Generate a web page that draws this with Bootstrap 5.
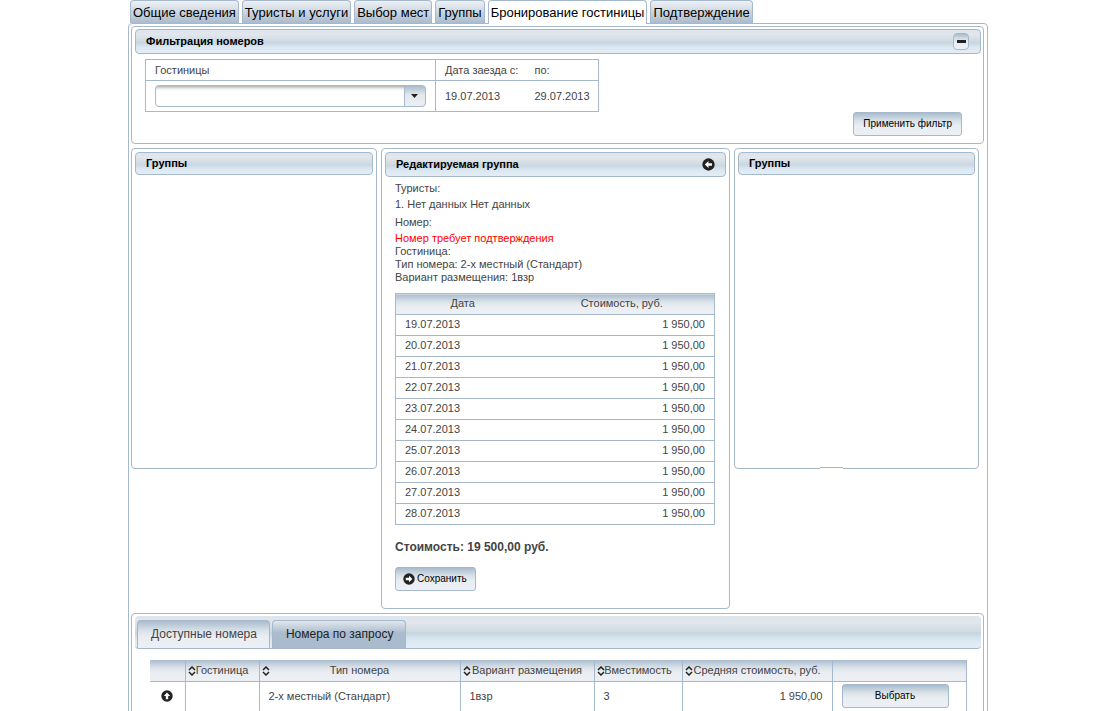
<!DOCTYPE html>
<html lang="ru">
<head>
<meta charset="utf-8">
<meta name="viewport" content="width=device-width, initial-scale=1">
<title>Бронирование гостиницы</title>
<link href="https://cdn.jsdelivr.net/npm/bootstrap@5.3.0/dist/css/bootstrap.min.css" rel="stylesheet">
<style>
:root { --line: #a6b9cc; --raised: linear-gradient(#a9bccd 0, #d9e1e8 35%, #eaeef2 60%, #eceff3 100%); --bar: linear-gradient(#dfe5ec 0, #e2e6ed 20%, #cfdae1 50%, #c7d5e1 52%, #dce8f1 76%, #e3edf5 100%); }
body { font: 11px/13px "Liberation Sans", Arial, sans-serif; color: #444; background: #fff; }
.page-wrap { max-width: 860px; }
.step-tabs { gap: 3px; margin: 0 2px -1px; position: relative; font-size: 13px; }
.step-tabs a { height: 23px; padding: 1px 2px 0; border: 1px solid var(--line); border-bottom-width: 0; border-radius: 4px 4px 0 0; color: #000; background: linear-gradient(#eef1f4, #a9bbcd); text-decoration: none; white-space: nowrap; line-height: 22px; text-align: center; }
.step-tabs a.active { background: #fff; height: 24px; }
.frame { border: 1px solid var(--line); border-radius: 4px; padding: 2px 3px 2px 2px; }
.panel { border: 1px solid var(--line); border-radius: 4px; padding: 2px 2px 3px 3px; }
.panel-bar { border: 1px solid var(--line); border-radius: 4px; background: var(--bar); color: #000; font-size: 11px; line-height: 13px; font-weight: bold; padding: 5px 10px; margin: 0; }
.panel-title { font-size: 11px; line-height: 13px; font-weight: bold; margin: 0; }
.grid-table { border-collapse: collapse; }
.grid-table th, .grid-table td { font-weight: normal; }
.filter-table, .filter-table .edge { border: 1px solid var(--line); }
.filter-table th, .filter-table td { padding: 0 8px 0 9px; white-space: nowrap; }
.filter-table .head { height: 21px; border-bottom: 1px solid var(--line); }
.filter-table .vals { height: 31px; }
.filter-table .w-hotel { width: 290px; }
.filter-table .w-from { width: 90px; padding-right: 6px; }
.combo { appearance: none; display: block; width: 271px; height: 22px; border: 1px solid var(--line); border-radius: 4px; font: inherit; padding: 0 24px 0 4px;
  background: url("data:image/svg+xml,%3Csvg xmlns='http://www.w3.org/2000/svg' width='7' height='4'%3E%3Cpath d='M0 0h7L3.5 4z' fill='%23222'/%3E%3C/svg%3E") right 7px center no-repeat, linear-gradient(var(--line), var(--line)) right 20px top/1px 100% no-repeat, linear-gradient(#a9bccd, #e4e9ee 45%, #eceff3) right/20px 100% no-repeat, linear-gradient(#b4b4b4, #f2f2f2 3px, #fff 5px); }
.push { font-size: 10px; line-height: 13px; color: #000; border: 1px solid var(--line); border-radius: 3px; background: var(--raised); padding: 4px 9px 5px; }
.push:hover { border-color: var(--line); }
.save { gap: 2px; padding: 4px 8px 5px 7px; }
.collapse-btn { width: 16px; height: 17px; margin: 3px 1px; padding: 0; border: 1px solid var(--line); border-radius: 4px; background: var(--raised); }
.filter-box { padding: 5px 19px 4px 10px; }
.three { display: grid; grid-template-columns: 246fr 349fr 245fr; gap: 4px; margin: 4px 5px 4px 0; align-items: start; }
.three .panel { padding: 3px; }
.three .side { height: 321px; }
.three .side .panel-bar { padding: 4px 10px; }
.side-r { position: relative; }
.side-r::after { content: ""; position: absolute; left: 35%; bottom: -1px; width: 23px; height: 2px; background: #fff; border-top: 1px solid var(--line); }
.group-body { padding: 5px 11px 14px 10px; }
.group-body p { margin: 0; }
.group-body .tourist { margin: 3px 0 5px; }
.group-body .room { margin-bottom: 3px; }
.alert-line { color: #f00; }
.price-table { width: 100%; margin-top: 9px; border: 1px solid var(--line); }
.price-table th { background: var(--raised); text-align: center; height: 21px; padding: 0 9px 1px; }
.price-table td { border-top: 1px solid var(--line); height: 21px; padding: 0 9px 1px; }
.price-table th:first-child { width: 42%; }
.group-body .total { font-size: 12px; line-height: 14px; font-weight: bold; margin: 15px 0 13px; }
.room-tabs { background: var(--bar); border-bottom: 1px solid var(--line); border-radius: 4px; padding: 4px 2px 0; gap: 2px; height: 33px; }
.room-tabs a { font-size: 12px; line-height: 13px; padding: 7px 12px 8px 13px; border: 1px solid var(--line); border-bottom: 0; border-radius: 4px 4px 0 0; text-decoration: none; color: #222; background: linear-gradient(#e2e7ec, #a9bbcd 45%); }
.room-tabs a.active { color: #444; background: var(--raised); }
.room-box { padding: 11px 16px 11px 15px; }
.room-table { width: 100%; table-layout: fixed; }
.room-table th { position: relative; background: var(--raised); height: 21px; text-align: center; border-bottom: 1px solid var(--line); padding: 0; white-space: nowrap; }
.room-table th, .room-table td { border-right: 1px solid var(--line); }
.room-table td { height: 30px; padding: 0 9px; border-bottom: 1px solid var(--line); }
.room-table th svg { position: absolute; left: 2px; top: 6px; }
.c1 { width: 35px; } .c2 { width: 74px; } .c3 { width: 201px; } .c4 { width: 134px; } .c5 { width: 88px; } .c6 { width: 150px; } .c7 { width: 134px; }
.pick { width: 107px; }
.bare { border: 0; background: none; padding: 0; display: block; line-height: 0; }
</style>
</head>
<body class="pe-1">
<svg width="0" height="0" class="position-absolute" aria-hidden="true">
  <symbol id="round-arrow" viewBox="0 0 12 12"><circle cx="6" cy="6" r="5.7" fill="#222"/><path d="M2.6 6 6 2.8v2h3.2v2.4H6v2z" fill="#fff"/></symbol>
  <symbol id="sorter" viewBox="0 0 8 10"><path d="M1 4 4 1l3 3M1 6l3 3 3-3" fill="none" stroke="#222" stroke-width="1.5"/></symbol>
</svg>
<div class="page-wrap mx-auto">
  <nav class="step-tabs d-flex">
    <a href="#">Общие сведения</a><a href="#">Туристы и услуги</a><a href="#">Выбор мест</a><a href="#">Группы</a><a href="#" class="active" aria-current="page">Бронирование гостиницы</a><a href="#">Подтверждение</a>
  </nav>
  <main class="frame">
    <section class="panel">
      <div class="panel-bar d-flex justify-content-between align-items-center py-0">
        <h2 class="panel-title">Фильтрация номеров</h2>
        <button type="button" class="collapse-btn d-flex align-items-center justify-content-center" aria-label="Свернуть"><svg width="9" height="3"><path d="M0 0h9v3H0z" fill="#222"/></svg></button>
      </div>
      <div class="filter-box">
        <table class="grid-table filter-table">
          <tr><th class="head w-hotel edge"><label for="hotel">Гостиницы</label></th><th class="head w-from">Дата заезда с:</th><th class="head">по:</th></tr>
          <tr><td class="vals edge"><select id="hotel" class="combo"><option></option></select></td><td>19.07.2013</td><td>29.07.2013</td></tr>
        </table>
        <div class="text-end lh-1"><button type="button" class="btn push">Применить фильтр</button></div>
      </div>
    </section>
    <div class="three">
      <section class="panel side"><h2 class="panel-bar">Группы</h2></section>
      <section class="panel">
        <div class="panel-bar d-flex justify-content-between align-items-center"><h2 class="panel-title">Редактируемая группа</h2>
          <button type="button" class="bare" aria-label="Назад"><svg width="13" height="13"><use href="#round-arrow"/></svg></button></div>
        <div class="group-body">
          <p>Туристы:</p>
          <p class="tourist">1. Нет данных Нет данных</p>
          <p class="room">Номер:</p>
          <p class="alert-line">Номер требует подтверждения</p>
          <p>Гостиница:</p>
          <p>Тип номера: 2-х местный (Стандарт)</p>
          <p>Вариант размещения: 1взр</p>
          <table class="grid-table price-table">
            <thead><tr><th>Дата</th><th>Стоимость, руб.</th></tr></thead>
            <tbody>
              <tr><td>19.07.2013</td><td class="text-end">1 950,00</td></tr>
              <tr><td>20.07.2013</td><td class="text-end">1 950,00</td></tr>
              <tr><td>21.07.2013</td><td class="text-end">1 950,00</td></tr>
              <tr><td>22.07.2013</td><td class="text-end">1 950,00</td></tr>
              <tr><td>23.07.2013</td><td class="text-end">1 950,00</td></tr>
              <tr><td>24.07.2013</td><td class="text-end">1 950,00</td></tr>
              <tr><td>25.07.2013</td><td class="text-end">1 950,00</td></tr>
              <tr><td>26.07.2013</td><td class="text-end">1 950,00</td></tr>
              <tr><td>27.07.2013</td><td class="text-end">1 950,00</td></tr>
              <tr><td>28.07.2013</td><td class="text-end">1 950,00</td></tr>
            </tbody>
          </table>
          <p class="total">Стоимость: 19 500,00 руб.</p>
          <button type="button" class="btn push save d-flex align-items-center"><svg width="12" height="12"><use href="#round-arrow" transform="rotate(180 6 6)"/></svg><span>Сохранить</span></button>
        </div>
      </section>
      <section class="panel side side-r"><h2 class="panel-bar">Группы</h2></section>
    </div>
    <section class="panel">
      <nav class="room-tabs d-flex"><a href="#" class="active">Доступные номера</a><a href="#">Номера по запросу</a></nav>
      <div class="room-box">
        <table class="grid-table room-table">
          <colgroup><col class="c1"><col class="c2"><col class="c3"><col class="c4"><col class="c5"><col class="c6"><col class="c7"></colgroup>
          <thead><tr><th></th>
            <th><svg width="8" height="10"><use href="#sorter"/></svg>Гостиница</th>
            <th><svg width="8" height="10"><use href="#sorter"/></svg>Тип номера</th>
            <th><svg width="8" height="10"><use href="#sorter"/></svg>Вариант размещения</th>
            <th><svg width="8" height="10"><use href="#sorter"/></svg>Вместимость</th>
            <th><svg width="8" height="10"><use href="#sorter"/></svg>Средняя стоимость, руб.</th>
            <th></th></tr></thead>
          <tbody><tr>
            <td><button type="button" class="bare mx-auto" aria-label="Добавить"><svg width="12" height="12"><use href="#round-arrow" transform="rotate(90 6 6)"/></svg></button></td>
            <td></td><td>2-х местный (Стандарт)</td><td>1взр</td><td>3</td><td class="text-end">1 950,00</td>
            <td><button type="button" class="btn push pick">Выбрать</button></td></tr></tbody>
        </table>
      </div>
    </section>
  </main>
</div>
<script src="https://cdn.jsdelivr.net/npm/bootstrap@5.3.0/dist/js/bootstrap.bundle.min.js"></script>
</body>
</html>
